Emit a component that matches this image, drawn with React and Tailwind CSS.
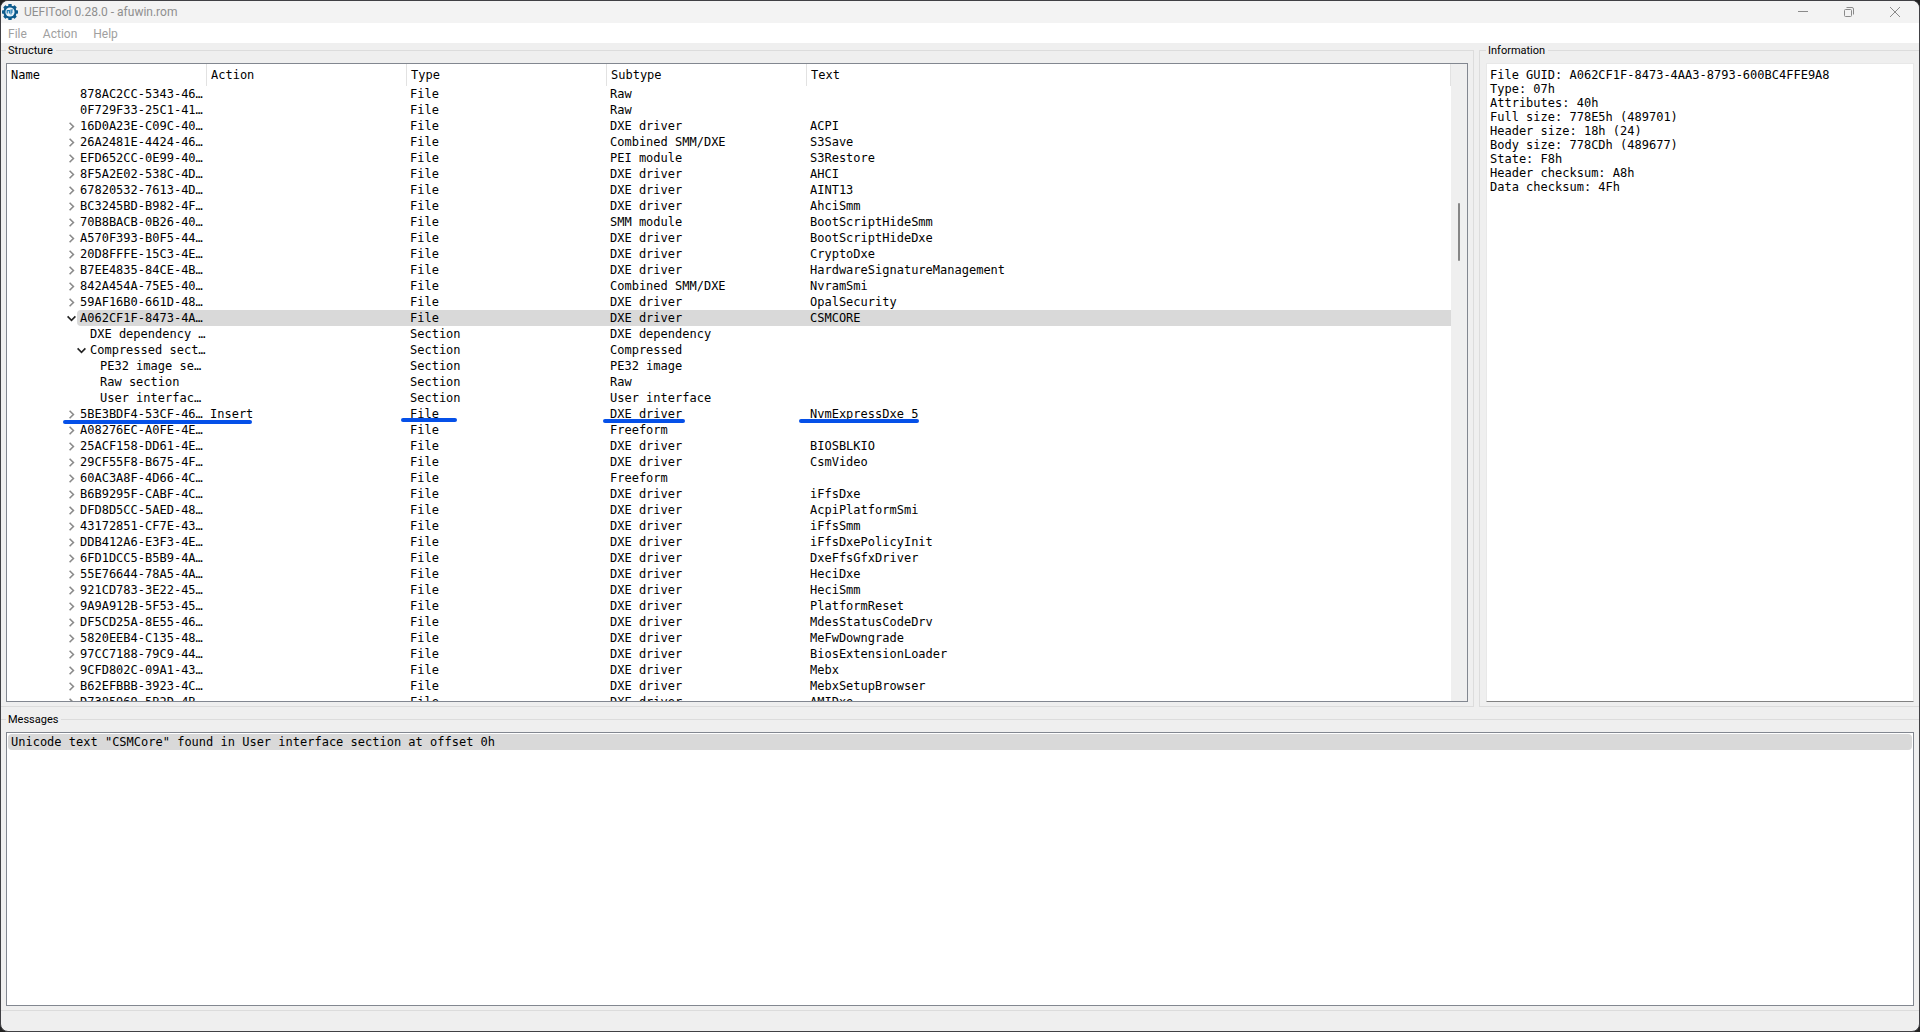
import React from "react";

const F = "File";
const S = "Section";
const D = "DXE driver";

// [depth, arrow, name, type, subtype, text, extra]
const ROWS = [
  [0, "", "878AC2CC-5343-46…", F, "Raw", ""],
  [0, "", "0F729F33-25C1-41…", F, "Raw", ""],
  [0, "r", "16D0A23E-C09C-40…", F, D, "ACPI"],
  [0, "r", "26A2481E-4424-46…", F, "Combined SMM/DXE", "S3Save"],
  [0, "r", "EFD652CC-0E99-40…", F, "PEI module", "S3Restore"],
  [0, "r", "8F5A2E02-538C-4D…", F, D, "AHCI"],
  [0, "r", "67820532-7613-4D…", F, D, "AINT13"],
  [0, "r", "BC3245BD-B982-4F…", F, D, "AhciSmm"],
  [0, "r", "70B8BACB-0B26-40…", F, "SMM module", "BootScriptHideSmm"],
  [0, "r", "A570F393-B0F5-44…", F, D, "BootScriptHideDxe"],
  [0, "r", "20D8FFFE-15C3-4E…", F, D, "CryptoDxe"],
  [0, "r", "B7EE4835-84CE-4B…", F, D, "HardwareSignatureManagement"],
  [0, "r", "842A454A-75E5-40…", F, "Combined SMM/DXE", "NvramSmi"],
  [0, "r", "59AF16B0-661D-48…", F, D, "OpalSecurity"],
  [0, "d", "A062CF1F-8473-4A…", F, D, "CSMCORE", "selected"],
  [1, "", "DXE dependency …", S, "DXE dependency", ""],
  [1, "d", "Compressed sect…", S, "Compressed", ""],
  [2, "", "PE32 image se…", S, "PE32 image", ""],
  [2, "", "Raw section", S, "Raw", ""],
  [2, "", "User interfac…", S, "User interface", ""],
  [0, "r", "5BE3BDF4-53CF-46…", F, D, "NvmExpressDxe_5", "marked"],
  [0, "r", "A08276EC-A0FE-4E…", F, "Freeform", ""],
  [0, "r", "25ACF158-DD61-4E…", F, D, "BIOSBLKIO"],
  [0, "r", "29CF55F8-B675-4F…", F, D, "CsmVideo"],
  [0, "r", "60AC3A8F-4D66-4C…", F, "Freeform", ""],
  [0, "r", "B6B9295F-CABF-4C…", F, D, "iFfsDxe"],
  [0, "r", "DFD8D5CC-5AED-48…", F, D, "AcpiPlatformSmi"],
  [0, "r", "43172851-CF7E-43…", F, D, "iFfsSmm"],
  [0, "r", "DDB412A6-E3F3-4E…", F, D, "iFfsDxePolicyInit"],
  [0, "r", "6FD1DCC5-B5B9-4A…", F, D, "DxeFfsGfxDriver"],
  [0, "r", "55E76644-78A5-4A…", F, D, "HeciDxe"],
  [0, "r", "921CD783-3E22-45…", F, D, "HeciSmm"],
  [0, "r", "9A9A912B-5F53-45…", F, D, "PlatformReset"],
  [0, "r", "DF5CD25A-8E55-46…", F, D, "MdesStatusCodeDrv"],
  [0, "r", "5820EEB4-C135-48…", F, D, "MeFwDowngrade"],
  [0, "r", "97CC7188-79C9-44…", F, D, "BiosExtensionLoader"],
  [0, "r", "9CFD802C-09A1-43…", F, D, "Mebx"],
  [0, "r", "B62EFBBB-3923-4C…", F, D, "MebxSetupBrowser"],
  [0, "r", "D7385969-5B2D-4B…", F, D, "AMIDxe"],
];

const INFO = [
  "File GUID: A062CF1F-8473-4AA3-8793-600BC4FFE9A8",
  "Type: 07h",
  "Attributes: 40h",
  "Full size: 778E5h (489701)",
  "Header size: 18h (24)",
  "Body size: 778CDh (489677)",
  "State: F8h",
  "Header checksum: A8h",
  "Data checksum: 4Fh",
];

const INDENT = ["pl-[60px]", "pl-[70px]", "pl-[80px]"];

function Arrow({ dir }) {
  if (!dir) return <span className="w-2.5 shrink-0" />;
  const open = dir === "d";
  return (
    <button
      type="button"
      aria-label={open ? "Collapse" : "Expand"}
      className="flex h-4 w-2.5 shrink-0 items-center"
    >
      <svg width="9" height="9" viewBox="0 0 9 9" fill="none" strokeWidth="1.6">
        {open ? (
          <path d="M0.6 2.4 4.5 6.3 8.4 2.4" stroke="#222" />
        ) : (
          <path d="M2.6 0.8 6.4 4.5 2.6 8.2" stroke="#8a8a8a" />
        )}
      </svg>
    </button>
  );
}

function Underline({ className }) {
  return <span className={`absolute z-10 h-1 rounded-full bg-[#0550e8] ${className}`} />;
}

function Row({ row }) {
  const [depth, arrow, name, type, subtype, text, extra] = row;
  const sel = extra === "selected" ? "bg-[#d9d9d9]" : "";
  const marked = extra === "marked";
  return (
    <tr className="h-4" aria-selected={extra === "selected"}>
      <td className="relative p-0">
        <div className={`flex h-4 ${INDENT[depth]}`}>
          <Arrow dir={arrow} />
          <span className={`flex-1 rounded-l-sm pl-[3px] whitespace-pre ${sel}`}>{name}</span>
        </div>
        {marked && <Underline className="top-3.5 left-14 w-[189px]" />}
      </td>
      <td className={`p-0 pl-[3px] ${sel}`}>{marked ? "Insert" : ""}</td>
      <td className={`relative p-0 pl-[3px] ${sel}`}>
        {type}
        {marked && <Underline className="top-3 -left-1.5 w-14" />}
      </td>
      <td className={`relative p-0 pl-[3px] ${sel}`}>
        {subtype}
        {marked && <Underline className="top-[13px] -left-1 w-[82px]" />}
      </td>
      <td className={`relative p-0 pl-[3px] ${sel}`}>
        {text}
        {marked && <Underline className="top-[13px] -left-2 w-[120px]" />}
      </td>
    </tr>
  );
}

function Gear() {
  return (
    <svg width="16" height="16" viewBox="0 0 16 16" aria-hidden="true">
      <g fill="#0d5b8c">
        <circle cx="8" cy="8" r="6.6" />
        {[0, 45, 90, 135, 180, 225, 270, 315].map((a) => (
          <rect key={a} x="6.3" y="0" width="3.4" height="3" rx="0.6" transform={`rotate(${a} 8 8)`} />
        ))}
      </g>
      <circle cx="8" cy="8" r="4.6" fill="#e6f1f8" />
      <path d="M5.2 6.2v3.2M5.2 6.6h2.2v3M9 5.4v5M9 6h2M9 8h1.8" stroke="#1976ad" strokeWidth="1.1" fill="none" />
    </svg>
  );
}

const HEAD = "relative border-r border-[#e2e2e2] p-0 text-left align-middle font-normal";
const LEGEND = "h-[15px] pl-0.5 pr-[3px] text-[11px] leading-[15px]";
const UI = "font-['Roboto','Noto_Sans',sans-serif]";

export default function App() {
  return (
    <div className="h-screen w-full overflow-hidden bg-[#222]">
      <div className="flex h-full flex-col overflow-hidden rounded-lg border border-[#404044] bg-[#efefef] font-['DejaVu_Sans_Mono','Liberation_Mono',monospace] text-[12px] leading-4 text-black">
        <header className={`flex h-[22px] shrink-0 items-center bg-[#f3f3f3] pl-px text-[#8f8f8f] ${UI}`}>
          <Gear />
          <h1 className="ml-[6px] flex-1 text-[12px]">UEFITool 0.28.0 - afuwin.rom</h1>
          <div className="flex h-full items-center pr-px">
            <button type="button" aria-label="Minimize" className="flex h-full w-[46px] items-center justify-center">
              <svg width="10" height="10" viewBox="0 0 10 10" fill="none" stroke="#8a8a8a">
                <path d="M0 4.5h10" />
              </svg>
            </button>
            <button type="button" aria-label="Restore" className="flex h-full w-[46px] items-center justify-center">
              <svg width="10" height="10" viewBox="0 0 10 10" fill="none" stroke="#8a8a8a">
                <rect x="0.5" y="2.5" width="7" height="7" rx="1" />
                <path d="M2.5 0.5h5.5a1.5 1.5 0 0 1 1.5 1.5v5.5" />
              </svg>
            </button>
            <button type="button" aria-label="Close" className="flex h-full w-[46px] items-center justify-center">
              <svg width="10" height="10" viewBox="0 0 10 10" fill="none" stroke="#8a8a8a">
                <path d="M0 0 10 10M10 0 0 10" />
              </svg>
            </button>
          </div>
        </header>

        <nav className={`flex h-5 shrink-0 items-center gap-4 bg-white pt-0.5 pl-[7px] text-[12px] text-[#a0a0a0] ${UI}`}>
          <button type="button">File</button>
          <button type="button">Action</button>
          <button type="button">Help</button>
        </nav>

        <main className="grid min-h-0 flex-1 grid-rows-[664fr_303fr]">
          <div className="grid min-h-0 grid-cols-[1473fr_440fr] gap-x-[5px]">
            <fieldset className="flex min-h-0 min-w-0 flex-col border border-l-0 border-[#dcdcdc] pr-[5px] pb-1 pl-[5px]">
              <legend className={`${LEGEND} ${UI}`}>Structure</legend>
              <div className="mt-[5px] flex min-h-0 flex-1 overflow-hidden border border-[#828790] bg-white">
                <div className="min-w-0 flex-1 overflow-hidden">
                  <table className="w-full table-fixed border-separate border-spacing-0">
                    <colgroup>
                      <col className="w-[200px]" />
                      <col className="w-[200px]" />
                      <col className="w-[200px]" />
                      <col className="w-[200px]" />
                      <col />
                    </colgroup>
                    <thead>
                      <tr className="h-[22px]">
                        <th scope="col" className={`${HEAD} pl-1`}>Name</th>
                        <th scope="col" className={`${HEAD} pl-1`}>Action</th>
                        <th scope="col" className={`${HEAD} pl-1`}>Type</th>
                        <th scope="col" className={`${HEAD} pl-1`}>Subtype</th>
                        <th scope="col" className={`${HEAD} pl-1`}>Text</th>
                      </tr>
                    </thead>
                    <tbody>
                      {ROWS.map((r) => (
                        <Row key={r[2]} row={r} />
                      ))}
                    </tbody>
                  </table>
                </div>
                <div className="flex w-4 shrink-0 flex-col items-center bg-[#efefef]">
                  <div className="grow-[139]" />
                  <div className="w-0.5 grow-[58] rounded-full bg-[#868686]" />
                  <div className="grow-[440]" />
                </div>
              </div>
            </fieldset>

            <fieldset className="flex min-h-0 min-w-0 flex-col border border-r-0 border-[#dcdcdc] pr-[5px] pb-1 pl-1.5">
              <legend className={`${LEGEND} ${UI}`}>Information</legend>
              <div className="mt-[5px] min-h-0 flex-1 overflow-hidden border border-[#e8e8e8] border-b-[#828282] bg-white pt-1 pl-[3px] leading-[14px]">
                {INFO.map((l) => (
                  <p key={l} className="whitespace-pre">{l}</p>
                ))}
              </div>
            </fieldset>
          </div>

          <fieldset className="mt-[5px] flex min-h-0 min-w-0 flex-col border-t border-[#dcdcdc] px-[5px] pt-0 pb-1">
            <legend className={`${LEGEND} ${UI}`}>Messages</legend>
            <ul className="mt-[5px] min-h-0 flex-1 overflow-hidden border border-[#828790] bg-white p-px">
              <li className="h-4 rounded-sm bg-[#d9d9d9] pl-[3px]">
                Unicode text "CSMCore" found in User interface section at offset 0h
              </li>
            </ul>
          </fieldset>
        </main>

        <footer className="h-[21px] shrink-0 border-t border-[#dcdcdc]" />
      </div>
    </div>
  );
}
